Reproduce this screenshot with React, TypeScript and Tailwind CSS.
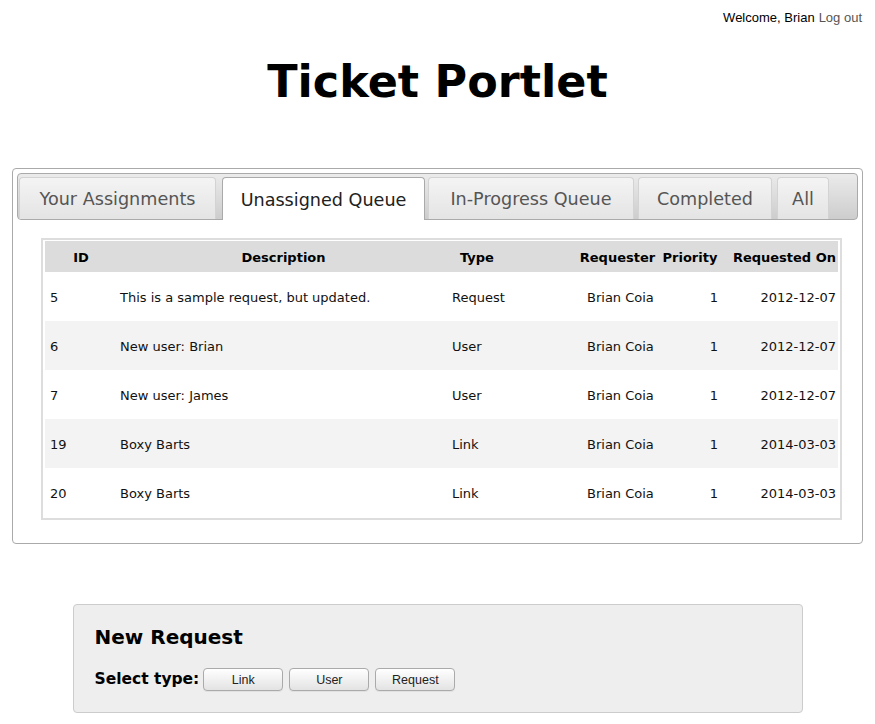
const tabs = [
  { label: "Your Assignments", w: "w-[197px]", ml: "ml-[1px]" },
  { label: "Unassigned Queue", w: "w-[203px]", ml: "ml-[6px]" },
  { label: "In-Progress Queue", w: "w-[206px]", ml: "ml-[3px]" },
  { label: "Completed", w: "w-[134px]", ml: "ml-[4px]" },
  { label: "All", w: "w-[52px]", ml: "ml-[5px]" },
];

const rows = [
  { id: "5", desc: "This is a sample request, but updated.", type: "Request", who: "Brian Coia", pri: "1", on: "2012-12-07" },
  { id: "6", desc: "New user: Brian", type: "User", who: "Brian Coia", pri: "1", on: "2012-12-07" },
  { id: "7", desc: "New user: James", type: "User", who: "Brian Coia", pri: "1", on: "2012-12-07" },
  { id: "19", desc: "Boxy Barts", type: "Link", who: "Brian Coia", pri: "1", on: "2014-03-03" },
  { id: "20", desc: "Boxy Barts", type: "Link", who: "Brian Coia", pri: "1", on: "2014-03-03" },
];

const verdana = "font-['DejaVu_Sans',Verdana,sans-serif]";
const helv = "font-['Liberation_Sans',Arial,sans-serif]";

export default function App() {
  const active = 1;

  return (
    <div className={`min-h-[724px] bg-white text-black ${verdana}`}>
      <div className={`flex justify-end pt-[10px] pr-[13px] text-[13px] leading-4 ${helv}`}>
        <span className="text-black">Welcome, Brian</span>
        <a className="ml-[4px] text-[#555]" href="#">Log out</a>
      </div>

      <h1 className="mt-[34px] text-center text-[44.5px] font-bold leading-none">Ticket Portlet</h1>

      <div className="mx-[12px] mt-[63px] rounded-[4px] border border-[#aaa] p-[4px] pb-[23px]">
        {/* tab bar */}
        <div className="flex h-[47px] items-end rounded-[4px] border border-[#aaa] bg-gradient-to-b from-[#ebebeb] to-[#cdcdcd]">
          {tabs.map((t, i) => (
            <div
              key={t.label}
              className={`${t.w} ${t.ml} ${
                i === active
                  ? "relative -mb-px flex h-[43px] items-center justify-center rounded-t-[4px] border border-b-0 border-[#aaa] bg-white pt-[3px] text-[17.6px] text-[#212121]"
                  : "flex h-[42px] items-center justify-center rounded-t-[4px] border border-b-0 border-[#d3d3d3] bg-gradient-to-b from-[#f4f4f4] to-[#e4e4e4] pt-[3px] text-[17.6px] text-[#555]"
              }`}
            >
              {t.label}
            </div>
          ))}
        </div>

        {/* table */}
        <div className="ml-[24px] mr-[16px] mt-[18px] border-2 border-[#ddd] px-[2px] pt-px pb-px text-[13px] text-[#111]">
          <div className="flex h-[31px] items-center bg-[#dcdcdc] pt-[3px] font-bold text-black">
            <div className="w-[72px] text-center">ID</div>
            <div className="w-[333px] text-center">Description</div>
            <div className="w-[126px] pl-[10px]">Type</div>
            <div className="w-[83px] text-center">Requester</div>
            <div className="w-[62px] text-center">Priority</div>
            <div className="flex-1 pr-[2px] text-right">Requested On</div>
          </div>
          {rows.map((r, i) => (
            <div key={r.id + i} className={`flex h-[49px] items-center pt-[4px] ${i % 2 === 1 ? "bg-[#f3f3f3]" : "bg-white"}`}>
              <div className="w-[72px] pl-[5px]">{r.id}</div>
              <div className="w-[333px] pl-[3px]">{r.desc}</div>
              <div className="w-[126px] pl-[2px]">{r.type}</div>
              <div className="w-[83px] pl-[11px]">{r.who}</div>
              <div className="w-[62px] pr-[3px] text-right">{r.pri}</div>
              <div className="flex-1 pr-[2px] text-right">{r.on}</div>
            </div>
          ))}
        </div>
      </div>

      {/* new request */}
      <div className="mx-auto mt-[60px] h-[109px] w-[730px] rounded-[4px] border border-[#ccc] bg-[#eee] px-[21px] pt-[20px]">
        <h2 className="text-[20px] font-bold leading-6">New Request</h2>
        <div className="mt-[19px] flex items-center">
          <span className="text-[15.5px] font-bold">Select type:</span>
          <div className={`ml-[4px] flex gap-[6px] ${helv}`}>
            {["Link", "User", "Request"].map((b) => (
              <button
                key={b}
                className="h-[23px] w-[80px] rounded-[4px] border border-[#aaa] bg-gradient-to-b from-white to-[#e3e3e3] pt-[2px] text-[12.5px] text-[#222] shadow-[0_1px_0_rgba(0,0,0,0.05)]"
              >
                {b}
              </button>
            ))}
          </div>
        </div>
      </div>
    </div>
  );
}
